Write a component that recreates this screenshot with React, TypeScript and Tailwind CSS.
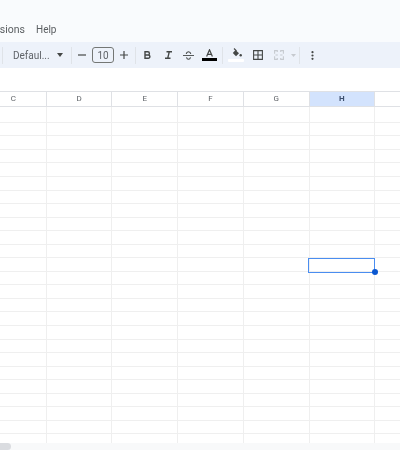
const columns = [
  { name: "C", width: "w-[65.7px]" },
  { name: "D", width: "w-[65.7px]" },
  { name: "E", width: "w-[65.7px]" },
  { name: "F", width: "w-[65.7px]" },
  { name: "G", width: "w-[65.7px]" },
  { name: "H", width: "w-[65.7px]" },
  { name: "", width: "flex-1" },
];

const rows = Array.from({ length: 25 }, (_, i) => i);

function Divider({ className = "" }: { className?: string }) {
  return <div className={`w-px h-[17px] bg-[#dfe3e8] shrink-0 ${className}`} />;
}

export default function App() {
  return (
    <div className="relative w-[400px] h-[450px] overflow-hidden bg-white font-['Roboto',sans-serif] text-[#444746] blur-[0.3px]">
      {/* Menu bar */}
      <div className="h-[42px] bg-[#f9fbfd] flex items-end pb-[5px] text-[10px] leading-[14px] text-[#5a5e61]">
        <span className="ml-[-30px] w-[55px] text-right shrink-0 text-[10.500px] whitespace-nowrap">Extensions</span>
        <span className="ml-[11px]">Help</span>
      </div>

      {/* Toolbar */}
      <div className="h-[26px] bg-[#edf2fa] flex items-center">
        <Divider className="ml-[2px]" />
        <span className="ml-[10px] w-[34px] shrink-0 text-[10px] text-[#5f6368] whitespace-nowrap">Defaul...</span>
        <svg className="ml-[9.500px] shrink-0" width="6" height="4" viewBox="0 0 6 4"><path d="M0 0h6L3 4z" fill="#444746" /></svg>
        <Divider className="ml-[8.500px]" />
        <svg className="ml-[6px] shrink-0" width="8" height="8" viewBox="0 0 8 8"><path d="M0 4h8" stroke="#444746" strokeWidth="1.2" /></svg>
        <div className="ml-[6px] w-[22px] h-[16px] shrink-0 rounded-[3px] border border-[#747775] flex items-center justify-center text-[10px] text-[#5f6368]">10</div>
        <svg className="ml-[5.500px] shrink-0" width="8" height="8" viewBox="0 0 8 8"><path d="M0 4h8M4 0v8" stroke="#444746" strokeWidth="1.2" /></svg>
        <Divider className="ml-[7px]" />
        <svg className="ml-[8px] shrink-0" width="7" height="8" viewBox="0 0 7 8" fill="none"><path d="M1 .8h2.800a1.600 1.600 0 0 1 0 3.200H1zM1 4h3.300a1.600 1.600 0 0 1 0 3.200H1z" stroke="#444746" strokeWidth="1.400" /></svg>
        <svg className="ml-[14.500px] shrink-0" width="7" height="8" viewBox="0 0 7 8" fill="none"><path d="M1.500.7H7M0 7.300h5.500M4.300.7 2.700 7.300" stroke="#444746" strokeWidth="1.400" /></svg>
        <svg className="ml-[11px] shrink-0" width="11" height="9" viewBox="0 0 11 9" fill="none"><path d="M0 4.500h11" stroke="#444746" strokeWidth="0.900" /><path d="M7.800 2.800C7.500 1.300 6.500.7 5.500.7S3.500 1.300 3.200 2.800M3.500 6.300c.3 1.200 1 2 2 2s1.700-.8 2-2" stroke="#444746" strokeWidth="1.100" /></svg>
        <div className="ml-[7.700px] flex flex-col items-center w-[15.300px] shrink-0">
          <svg width="7" height="8" viewBox="0 0 7 8" fill="none"><path d="M.6 7.600 3.500.8l2.900 6.800M1.600 5.300h3.800" stroke="#444746" strokeWidth="1.200" /></svg>
          <div className="w-full h-[2.600px] mt-[1px] bg-black" />
        </div>
        <Divider className="ml-[5.500px]" />
        <div className="ml-[5px] flex flex-col items-center w-[15.400px] shrink-0">
          <svg className="ml-[2px]" width="10" height="9" viewBox="0 0 10 9"><path d="M3.500 2 7 5.300 4 8.300.8 5z" fill="#444746" /><path d="M2 .5l2.500 2.500" stroke="#444746" strokeWidth="1.100" /><circle cx="8.700" cy="7.300" r="1.200" fill="#444746" /></svg>
          <div className="w-full h-[3px] mt-[2px] rounded-[1px] bg-white" />
        </div>
        <svg className="ml-[9px] shrink-0" width="10" height="10" viewBox="0 0 10 10" fill="none"><path d="M.6.6h8.800v8.800H.6zM5 .6v8.800M.6 5h8.800" stroke="#444746" strokeWidth="1.100" /></svg>
        <svg className="ml-[11.600px] shrink-0" width="10" height="10" viewBox="0 0 10 10" fill="none"><path d="M.6 3.800V.6h2.700v1.500M9.400 3.800V.6H6.700v1.500M.6 6.200v3.200h2.700V7.900M9.400 6.200v3.200H6.700V7.900M1.500 5h2.300M8.500 5H6.200" stroke="#c6cacf" strokeWidth="1.100" /></svg>
        <svg className="ml-[6.400px] shrink-0" width="5" height="3" viewBox="0 0 5 3"><path d="M0 0h5L2.500 3z" fill="#c6cacf" /></svg>
        <Divider className="ml-[3.300px]" />
        <svg className="ml-[10.500px] shrink-0" width="3" height="9" viewBox="0 0 3 9" fill="#444746"><circle cx="1.500" cy="1.200" r="1.100" /><circle cx="1.500" cy="4.500" r="1.100" /><circle cx="1.500" cy="7.800" r="1.100" /></svg>
      </div>

      <div className="h-[23px] bg-white" />

      {/* Column headers, column C starts off screen */}
      <div className="flex h-[16px] ml-[-18.900px] border-t border-b border-[#dfe1e5] text-[8px] leading-[14px] text-[#5f6368]">
        {columns.map((col) => (
          <div
            key={col.name}
            className={`${col.width} shrink-0 text-center border-r border-[#dfe1e5] last:border-r-0 ${col.name === "H" ? "bg-[#d3e3fd] text-[#3c4f6e] font-bold" : ""}`}
          >
            {col.name}
          </div>
        ))}
      </div>

      {/* Grid */}
      <div className="ml-[-18.900px]">
        {rows.map((row) => (
          <div key={row} className="flex h-[13.550px] first:h-[15.800px] border-b border-[#efefef]">
            {columns.map((col) => (
              <div key={col.name} className={`${col.width} shrink-0 border-r border-[#efefef] last:border-r-0`} />
            ))}
          </div>
        ))}
      </div>

      {/* Selected cell */}
      <div className="absolute left-[308px] top-[257.500px] w-[67px] h-[15px] border-[1.500px] border-[#4a8df0]" />
      <div className="absolute left-[371.500px] top-[269px] w-[6px] h-[6px] rounded-full bg-[#0b57d0]" />

      {/* Horizontal scrollbar */}
      <div className="absolute left-0 right-0 top-[443px] h-[7px] bg-[#f8f9fa]">
        <div className="w-[11px] h-[7px] rounded-r-full bg-[#dadce0]" />
      </div>
    </div>
  );
}
